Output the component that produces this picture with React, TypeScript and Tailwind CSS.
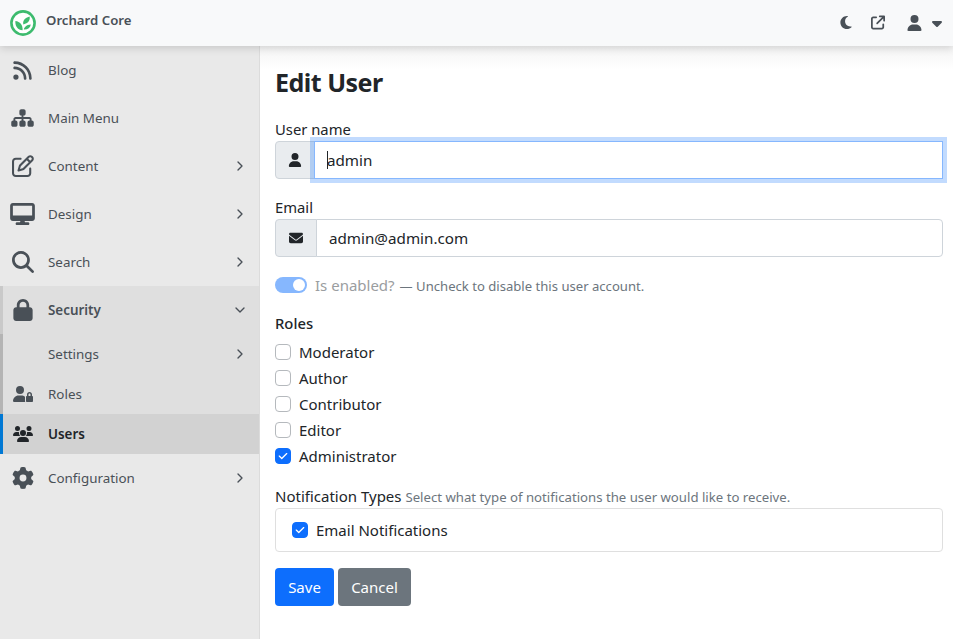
import { ChevronRight, ChevronDown } from "lucide-react";
import {
  FaRss,
  FaSitemap,
  FaRegPenToSquare,
  FaDesktop,
  FaMagnifyingGlass,
  FaLock,
  FaUserLock,
  FaUsers,
  FaGear,
  FaMoon,
  FaUser,
  FaEnvelope,
  FaCheck,
  FaCaretDown,
  FaArrowUpRightFromSquare,
} from "react-icons/fa6";

const font = "[font-family:'Noto_Sans',sans-serif]";

const Logo = () => (
  <svg viewBox="0 0 26 26" className="w-[26px] h-[26px]">
    <circle cx="13" cy="13" r="11.6" fill="#fff" stroke="#3dbb6e" strokeWidth="2.6" />
    <path d="M12.6 20.2C7.8 20 5 16.6 5.4 11c4.6.6 7.4 3.8 7.2 9.2z" fill="#3dbb6e" />
    <path d="M13.8 19.6c.6-2.6 2.6-4.6 7-5-.6 3.4-3 5.2-7 5z" fill="#3dbb6e" />
    <path d="M13.4 14.4c-.8-2.6.4-6 6.2-7.8.8 3.8-1.4 6.8-6.2 7.8z" fill="#3dbb6e" />
  </svg>
);

const Row = ({ icon, label, arrow }: { icon?: React.ReactNode; label: string; arrow?: boolean }) => (
  <div className="flex items-center h-12 text-[13.4px] text-[#495057]">
    <div className="w-[45px] flex justify-center text-[#495057]">{icon}</div>
    <span className="ml-[3px]">{label}</span>
    {arrow && <ChevronRight className="ml-auto mr-[11px] w-4 h-4" strokeWidth={2} />}
  </div>
);

const Check = ({ label, checked }: { label: string; checked?: boolean }) => (
  <label className="flex items-center h-[26px] text-[15px] text-[#212529]">
    <span
      className={`w-4 h-4 rounded-[4px] border flex items-center justify-center mr-2 ${
        checked ? "bg-[#0d6efd] border-[#0d6efd]" : "bg-white border-[#b5b9bd]"
      }`}
    >
      {checked && <FaCheck className="text-white w-[10px] h-[10px]" />}
    </span>
    <span>{label}</span>
  </label>
);

export default function App() {
  return (
    <div className={`${font} w-[953px] h-[639px] overflow-hidden bg-white flex flex-col`}>
      <header className="relative z-10 h-[46px] shrink-0 bg-[#f8f9fa] shadow-[0_2px_8px_rgba(0,0,0,0.15)] flex items-center pl-[10px] pr-[10px]">
        <Logo />
        <span className="ml-[10px] -mt-[4px] text-[13.2px] font-semibold text-[#495057]">Orchard Core</span>
        <div className="ml-auto flex items-center text-[#495057] -mt-[1px] -mr-[2px]">
          <FaMoon className="w-[14px] h-[15px]" />
          <FaArrowUpRightFromSquare className="ml-[18px] w-[14px] h-[15px]" />
          <FaUser className="ml-[22px] w-[15px] h-[16px]" />
          <FaCaretDown className="ml-[7px] w-4 h-4" />
        </div>
      </header>

      <div className="flex flex-1 min-h-0">
        <aside className="w-[260px] shrink-0 bg-[#e9e9e9] border-r border-[#dcdcdc]">
          <Row icon={<FaRss className="w-[21px] h-[21px]" />} label="Blog" />
          <Row icon={<FaSitemap className="w-[25px] h-[20px]" />} label="Main Menu" />
          <Row icon={<FaRegPenToSquare className="w-[22px] h-[22px]" />} label="Content" arrow />
          <Row icon={<FaDesktop className="w-[25px] h-[22px]" />} label="Design" arrow />
          <Row icon={<FaMagnifyingGlass className="w-[22px] h-[22px]" />} label="Search" arrow />
          <div className="bg-[#dfdfdf]">
            <div className="flex items-center h-12 text-[13.4px] font-semibold text-[#495057] border-l-[3px] border-[#c9c9c9]">
              <div className="w-[39px] flex justify-center">
                <FaLock className="w-[20px] h-[22px]" />
              </div>
              <span className="ml-[6px]">Security</span>
              <ChevronDown className="ml-auto mr-[11px] w-4 h-4" />
            </div>
            <div className="border-l-[3px] border-[#b4b4b4]">
              <div className="flex items-center h-10 text-[13.4px] text-[#495057] pl-[45px]">
                <span>Settings</span>
                <ChevronRight className="ml-auto mr-[11px] w-4 h-4" />
              </div>
              <div className="flex items-center h-10 text-[13.4px] text-[#495057]">
                <div className="w-[39px] flex justify-center">
                  <FaUserLock className="w-[20px] h-[16px]" />
                </div>
                <span className="ml-[6px]">Roles</span>
              </div>
            </div>
            <div className="flex items-center h-10 text-[13.4px] font-semibold text-[#212529] bg-[#d2d2d2] border-l-[3px] border-[#0078d4]">
              <div className="w-[39px] flex justify-center">
                <FaUsers className="w-[20px] h-[16px]" />
              </div>
              <span className="ml-[6px]">Users</span>
            </div>
          </div>
          <Row icon={<FaGear className="w-[22px] h-[22px]" />} label="Configuration" arrow />
        </aside>

        <main className="flex-1 pl-[15px] pr-[10px] bg-[linear-gradient(#f4f4f4,#ffffff_24px)]">
          <h1 className="mt-[18px] text-[25px] tracking-[-0.5px] leading-[36px] font-bold text-[#212529]">Edit User</h1>

          <div className="mt-[18px] text-[14.8px] leading-[22px] text-[#212529]">User name</div>
          <div className="flex h-[38px] mt-[1px]">
            <div className="w-[40px] flex items-center justify-center bg-[#e9ecef] border border-[#ced4da] rounded-l-[4px]">
              <FaUser className="w-[14px] h-[14px] text-[#212529]" />
            </div>
            <div className="flex-1 -ml-[1px] relative z-[1] flex items-center bg-white border border-[#86b7fe] pl-[12px] text-[15.2px] text-[#212529] shadow-[0_0_0_4px_rgba(13,110,253,0.25)]">
              <span className="w-px h-[18px] bg-[#212529]" />
              <span className="-ml-px">admin</span>
            </div>
          </div>

          <div className="mt-[17px] text-[14.8px] leading-[22px] text-[#212529]">Email</div>
          <div className="flex h-[38px] mt-[1px]">
            <div className="w-[42px] flex items-center justify-center bg-[#e9ecef] border border-[#ced4da] rounded-l-[4px]">
              <FaEnvelope className="w-[16px] h-[14px] text-[#212529]" />
            </div>
            <div className="flex-1 -ml-[1px] flex items-center bg-white border border-[#ced4da] rounded-r-[4px] pl-[12px] text-[15.2px] text-[#212529]">
              admin@admin.com
            </div>
          </div>

          <div className="flex items-center mt-[18px] h-[20px]">
            <span className="w-8 h-4 rounded-full bg-[#86b7fe] flex items-center justify-end pr-[2px]">
              <span className="w-3 h-3 rounded-full bg-white" />
            </span>
            <span className="ml-2 text-[15px] text-[#9a9da0]">Is enabled?</span>
            <span className="ml-[5px] mt-[3px] text-[13.1px] text-[#6c757d]">— Uncheck to disable this user account.</span>
          </div>

          <div className="mt-[17px] text-[14.8px] leading-[22px] font-medium text-[#212529]">Roles</div>
          <div className="mt-[5px]">
            <Check label="Moderator" />
            <Check label="Author" />
            <Check label="Contributor" />
            <Check label="Editor" />
            <Check label="Administrator" checked />
          </div>

          <div className="mt-[16px] leading-[22px] text-[15px] text-[#212529]">
            Notification Types <span className="text-[13.2px] text-[#6c757d]">Select what type of notifications the user would like to receive.</span>
          </div>
          <div className="h-[44px] border border-[#dfdfdf] rounded-[4px] flex items-center pl-[16px]">
            <Check label="Email Notifications" checked />
          </div>

          <div className="flex gap-1 mt-[16px]">
            <button className="h-[38px] w-[59px] rounded-[4px] bg-[#0d6efd] text-white text-[15px]">Save</button>
            <button className="h-[38px] w-[73px] rounded-[4px] bg-[#6c757d] text-white text-[15px]">Cancel</button>
          </div>
        </main>
      </div>
    </div>
  );
}
